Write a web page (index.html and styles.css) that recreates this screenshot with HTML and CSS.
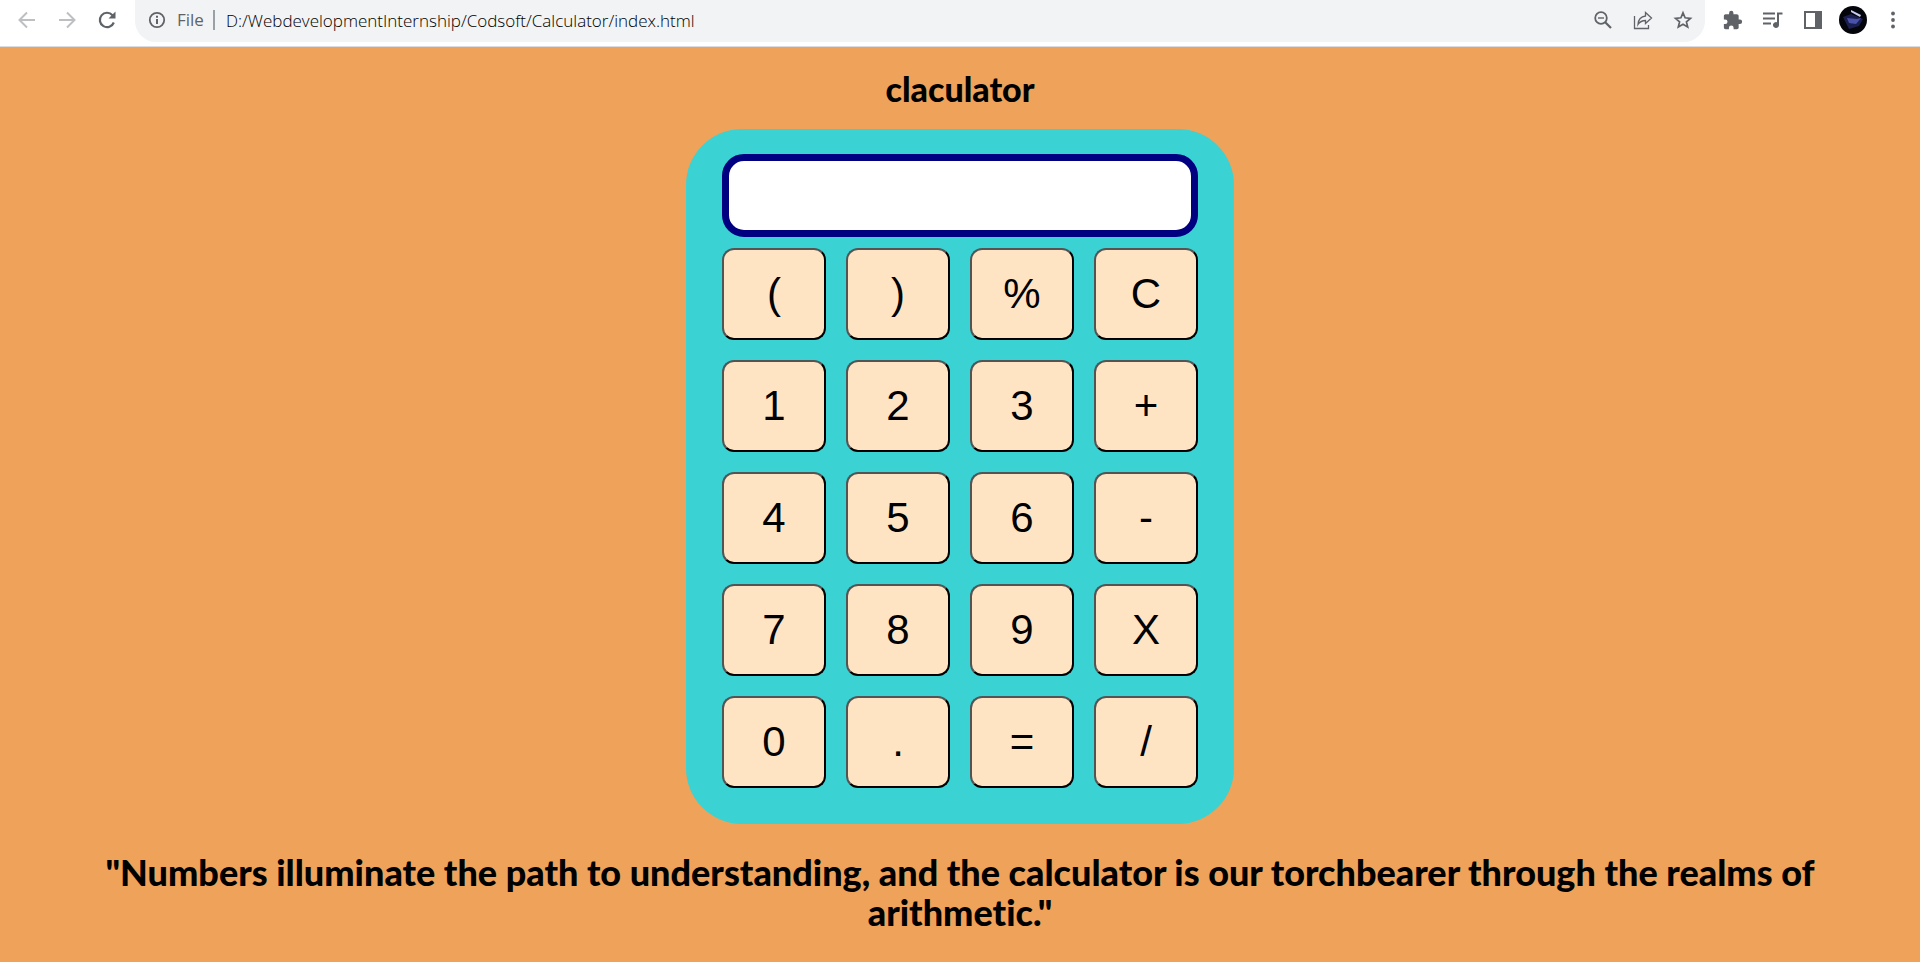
FILE: index.html
```html
<!DOCTYPE html>
<html lang="en">
<head>
<meta charset="utf-8">
<title>Calculator</title>
<link rel="stylesheet" href="styles.css">
</head>
<body>
<header class="toolbar">
  <nav class="nav">
    <button class="icon-btn faded" aria-label="Back"><svg width="20" height="20" viewBox="0 0 20 20"><path d="M18 10H3M10 2.500 2.500 10l7.500 7.500" fill="none" stroke="currentColor" stroke-width="2"/></svg></button>
    <button class="icon-btn faded" aria-label="Forward"><svg width="20" height="20" viewBox="0 0 20 20"><path d="M2 10h15M10 2.500 17.500 10 10 17.500" fill="none" stroke="currentColor" stroke-width="2"/></svg></button>
    <button class="icon-btn" aria-label="Reload"><svg width="20" height="20" viewBox="0 0 20 20"><path d="M16.800 12.500A7.200 7.200 0 1 1 15.500 5.200L17 6.800" fill="none" stroke="currentColor" stroke-width="2.200"/><path d="M18.500 1.500v7h-7z" fill="currentColor"/></svg></button>
  </nav>
  <div class="address">
    <svg class="info" width="18" height="18" viewBox="0 0 18 18"><circle cx="9" cy="9" r="7.200" fill="none" stroke="currentColor" stroke-width="1.800"/><path d="M8 8h2v5H8zM8 4.700h2v2H8z" fill="currentColor"/></svg>
    <span class="scheme">File</span>
    <input class="url" type="text" aria-label="Address" value="D:/WebdevelopmentInternship/Codsoft/Calculator/index.html">
    <div class="actions">
      <button class="icon-btn" aria-label="Zoom"><svg width="20" height="20" viewBox="0 0 20 20"><circle cx="8" cy="8" r="5.800" fill="none" stroke="currentColor" stroke-width="1.800"/><path d="M12 12l6 6" stroke="currentColor" stroke-width="2.200"/><path d="M5 8h6" stroke="currentColor" stroke-width="1.400"/></svg></button>
      <button class="icon-btn" aria-label="Share"><svg width="20" height="20" viewBox="0 0 20 20"><path d="M1.500 6v12.500h14V15M12.500 2.500l6 5.500-6 5.500V10.500C9.500 10.500 7 11.500 5 14.500c.3-4.500 3-8 7.500-8.500z" fill="none" stroke="currentColor" stroke-width="1.300"/></svg></button>
      <button class="icon-btn" aria-label="Bookmark"><svg width="20" height="20" viewBox="0 0 20 20"><path d="M10 2.800l2.100 5 5.400.5-4.100 3.500 1.300 5.300L10 14.300l-4.700 2.800 1.300-5.300-4.100-3.500 5.400-.5z" fill="none" stroke="currentColor" stroke-width="1.700"/></svg></button>
    </div>
  </div>
  <div class="tools">
    <button class="icon-btn" aria-label="Extensions"><svg width="20" height="20" viewBox="1 0 23 23"><path d="M20.500 11H19V7c0-1.100-.9-2-2-2h-4V3.500a2.500 2.500 0 0 0-5 0V5H4c-1.100 0-2 .9-2 2v3.800h1.500a2.700 2.700 0 0 1 0 5.400H2V20c0 1.100.9 2 2 2h3.800v-1.500a2.700 2.700 0 0 1 5.400 0V22H17c1.100 0 2-.9 2-2v-4h1.500a2.500 2.500 0 0 0 0-5z" fill="currentColor"/></svg></button>
    <button class="icon-btn" aria-label="Media"><svg width="20" height="20" viewBox="0 0 20 20"><path d="M0 3.500h12M0 8.500h12M0 13.500h8" stroke="currentColor" stroke-width="1.800"/><path d="M14 2.500h5.500v2H16V15a3 3 0 1 1-2-2.800z" fill="currentColor"/></svg></button>
    <button class="icon-btn" aria-label="Side panel"><svg width="20" height="20" viewBox="0 0 20 20"><path d="M1 1h18v18H1zM3 3v14h9V3z" fill="currentColor" fill-rule="evenodd"/></svg></button>
    <button class="icon-btn" aria-label="Profile"><svg width="28" height="28" viewBox="0 0 28 28"><circle cx="14" cy="14" r="14" fill="#04040b"/><path d="M4 11l8-3 12 5-4 7-10 3z" fill="#1b1f4f"/><path d="M8 12l10 1 4-1-5 6-7-1z" fill="#4a51a8"/><path d="M12 4l10 5-1 2-9-5z" fill="#c9cdf0"/></svg></button>
    <button class="icon-btn" aria-label="Menu"><svg width="20" height="20" viewBox="0 0 20 20"><g fill="currentColor"><circle cx="10" cy="3.500" r="1.900"/><circle cx="10" cy="10" r="1.900"/><circle cx="10" cy="16.500" r="1.900"/></g></svg></button>
  </div>
</header>
<main class="page">
  <h1 class="title">claculator</h1>
  <section class="calculator" aria-label="Calculator">
    <input class="display" type="text" aria-label="Display">
    <div class="keys">
      <button class="key">(</button><button class="key">)</button><button class="key">%</button><button class="key">C</button>
      <button class="key">1</button><button class="key">2</button><button class="key">3</button><button class="key">+</button>
      <button class="key">4</button><button class="key">5</button><button class="key">6</button><button class="key">-</button>
      <button class="key">7</button><button class="key">8</button><button class="key">9</button><button class="key">X</button>
      <button class="key">0</button><button class="key">.</button><button class="key">=</button><button class="key">/</button>
    </div>
  </section>
  <p class="quote">"Numbers illuminate the path to understanding, and the calculator is our torchbearer through the realms of arithmetic."</p>
</main>
</body>
</html>
```
FILE: styles.css
```css
* { box-sizing: border-box; }

body {
  margin: 0;
  min-height: 100vh;
  background: #eea25a;
  color: #000;
  font-family: Lato, "Gill Sans", sans-serif;
  font-variant-ligatures: none;
}

.toolbar {
  display: flex;
  align-items: flex-start;
  height: 47px;
  padding: 0 16px;
  background: #fff;
  border-bottom: 1px solid #dadce0;
  color: #5f6368;
}

.nav, .tools, .actions {
  display: flex;
  align-items: center;
  gap: 18px;
  height: 40px;
}

.nav { width: 119px; }
.tools { padding-left: 17px; }

.icon-btn {
  display: flex;
  align-items: center;
  justify-content: center;
  width: 22px;
  padding: 0;
  border: 0;
  background: none;
  color: inherit;
}

.icon-btn svg { flex: none; }

.faded { color: #bdbfc2; }

.address {
  flex: 1;
  display: flex;
  align-items: center;
  height: 42px;
  padding: 0 11px 2px 13px;
  border-radius: 0 0 21px 21px;
  background: #f1f3f4;
  font-family: "Open Sans", sans-serif;
  font-size: 17px;
}

.info { flex: none; }

.scheme {
  margin-left: 11px;
  padding-right: 9px;
  border-right: 2px solid #9aa0a6;
  line-height: 20px;
}

.url {
  flex: 1;
  min-width: 0;
  margin-left: 11px;
  padding: 0;
  border: 0;
  background: none;
  color: #000;
  font: inherit;
  font-weight: 300;
}

.page {
  display: flex;
  flex-direction: column;
  align-items: center;
  padding: 22px 16px;
}

.title {
  margin: 0 0 20px;
  font-size: 34px;
  font-weight: 900;
  line-height: 40px;
}

.calculator {
  display: flex;
  flex-direction: column;
  gap: 11px;
  padding: 25px 36px 36px;
  border-radius: 56px;
  background: #3ad2d2;
}

.display {
  width: 0;
  min-width: 100%;
  height: 83px;
  padding: 0 16px;
  border: 7px solid navy;
  border-radius: 22px;
  background: #fff;
  font: 42px "Liberation Sans", Arial, sans-serif;
}

.keys {
  display: grid;
  grid-template-columns: repeat(4, 104px);
  gap: 20px;
}

.key {
  height: 92px;
  padding: 0;
  border: 2px outset #000;
  border-radius: 12px;
  background: bisque;
  color: #000;
  font: 42px "Liberation Sans", Arial, sans-serif;
}

.quote {
  margin: 28px 0 0;
  padding: 0 64px;
  font-size: 36px;
  font-weight: 900;
  line-height: 40px;
  text-align: center;
}
```
